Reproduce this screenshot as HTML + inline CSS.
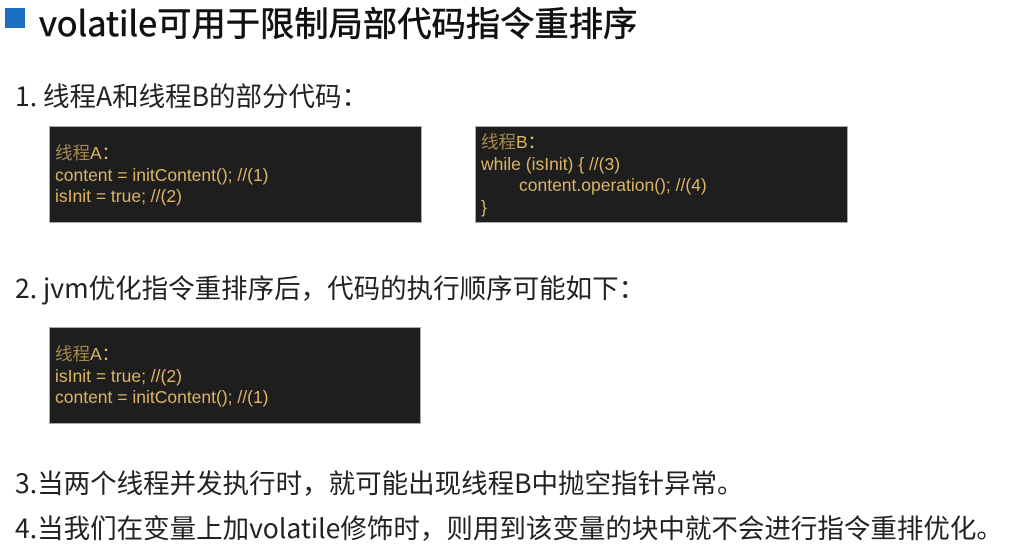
<!DOCTYPE html><html><head><meta charset="utf-8"><style>
body{margin:0;width:1011px;height:549px;background:#fff;position:relative;overflow:hidden;font-family:"Liberation Sans","Noto Sans CJK SC",sans-serif;color:#222}
.t{position:absolute;white-space:nowrap}
.h{font-size:34.3px;left:39px;top:-4px;font-family:"Noto Sans CJK SC",sans-serif;-webkit-text-stroke:0.6px #111;color:#111}
.sq{position:absolute;left:5px;top:8px;width:20px;height:20px;background:#1b6fc2}
.p{font-size:26.5px;left:15px;font-family:"Noto Sans CJK SC",sans-serif;color:#222}
.box{position:absolute;background:#1e1e1e;border:1px solid #aaa;box-sizing:border-box;color:#dcb466;font-size:17.5px;line-height:21.5px;padding-left:5px;font-family:"Liberation Sans","Noto Sans CJK SC",sans-serif;letter-spacing:0}
.box .c{color:#a8884e}
.ind{padding-left:38px}
</style></head><body>
<div class="sq"></div>
<div class="t h">volatile可用于限制局部代码指令重排序</div>
<div class="t p" style="top:75px">1. 线程A和线程B的部分代码：</div>
<div class="box" style="left:49px;top:126px;width:373px;height:97px;padding-top:16px"><span class="c">线程</span>A：<br>content = initContent(); //(1)<br>isInit = true; //(2)</div>
<div class="box" style="left:475px;top:126px;width:373px;height:97px;padding-top:5px"><span class="c">线程</span>B：<br>while (isInit) { //(3)<br><span class="ind">content.operation(); //(4)</span><br>}</div>
<div class="t p" style="top:267px">2. jvm优化指令重排序后，代码的执行顺序可能如下：</div>
<div class="box" style="left:49px;top:327px;width:372px;height:97px;padding-top:16px"><span class="c">线程</span>A：<br>isInit = true; //(2)<br>content = initContent(); //(1)</div>
<div class="t p" style="top:462px">3.当两个线程并发执行时，就可能出现线程B中抛空指针异常。</div>
<div class="t p" style="top:507px">4.当我们在变量上加volatile修饰时，则用到该变量的块中就不会进行指令重排优化。</div>
</body></html>
